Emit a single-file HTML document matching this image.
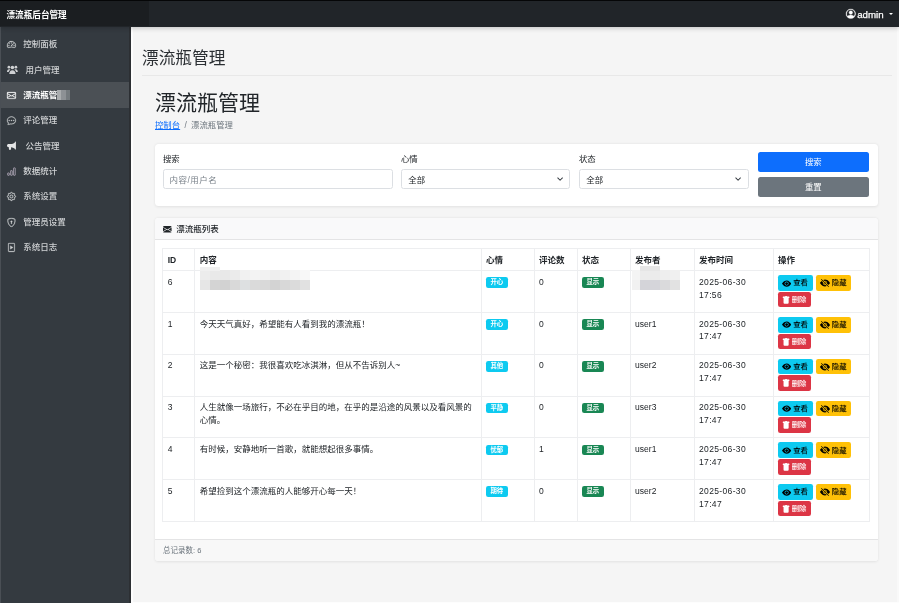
<!DOCTYPE html>
<html lang="zh-CN">
<head>
<meta charset="utf-8">
<title>漂流瓶管理 - 漂流瓶后台管理</title>
<style>
*{box-sizing:border-box;margin:0;padding:0}
html,body{width:899px;height:603px;overflow:hidden}
body>*{will-change:transform}
body{position:relative;background:#f5f5f5;color:#212529;font-family:"Liberation Sans","Noto Sans CJK SC",sans-serif;font-size:8.5px;line-height:1.5}
a{color:#0d6efd;text-decoration:underline}
svg{display:block}
button{border:0;margin:0;font-family:inherit;font-weight:inherit;letter-spacing:normal;cursor:pointer;-webkit-appearance:none;appearance:none}

/* top navbar */
.topbar{position:absolute;left:0;top:0;width:899px;height:26.5px;background:#212529;border-top:1.3px solid #050607;z-index:5;box-shadow:0 1px 5px rgba(0,0,0,.22)}
.brand{position:absolute;left:0;top:0;width:149px;height:25.2px;background:#1b1e21;color:#fff;font-size:8.6px;font-weight:700;padding-left:6.5px;line-height:29px;white-space:nowrap}
.user{position:absolute;right:6.2px;top:.5px;height:25.2px;display:flex;align-items:center;color:#fff;font-size:9.7px;line-height:25px;-webkit-text-stroke:.25px #fff}
.user svg{margin-right:1.6px;overflow:visible}
.user svg path{stroke:#fff;stroke-width:.5px}
.user .caret{width:0;height:0;border-left:2px solid transparent;border-right:2px solid transparent;border-top:2.2px solid #fff;margin-left:5.2px;margin-top:.6px}

/* sidebar */
.sidebar{position:absolute;left:0;top:26.5px;width:131px;height:576.5px;background:#343a40;z-index:3;border-right:2px solid #2c2f33;border-left:1px solid #4a4f55}
.sidebar ul{list-style:none;padding-top:4.8px}
.sidebar li{height:25.4px;position:relative}
.sidebar li a{display:flex;align-items:center;height:25.4px;color:#cfd1d3;text-decoration:none;font-size:8.5px;font-weight:500;padding-left:5.5px;white-space:nowrap}
.sidebar li a .ic{width:8.9px;height:8.9px;flex:none;margin-right:7.9px}
.sidebar li a .ic.wide{width:10.8px;height:9.2px;margin-right:8.2px;position:relative;top:-.6px}
.sidebar li a .ic.wide.bh{width:9.2px;height:9.2px;margin-left:.4px;margin-right:9.4px;color:#e4e5e6}
.sidebar li a .ic svg{width:100%;height:100%;overflow:visible}
.sidebar li a .ic:not(.wide) svg path{stroke:currentColor;stroke-width:.45px}
.sidebar li.active::before{content:"";position:absolute;left:0;right:0;top:-0.9px;height:25.9px;background:#4b5055}
.sidebar li.active a{position:relative}
.sidebar li.active a{color:#fff;font-weight:700}

/* main */
.main{position:absolute;left:131px;top:26.5px;width:765.8px;height:575.2px;background:#f5f5f5;border-left:2.6px solid #fdfdfd}
.rstrip{position:absolute;left:896.8px;top:26.5px;width:2.7px;height:576.5px;background:#f9f9f9}
.bstrip{position:absolute;left:131px;top:601.6px;width:768px;height:1.4px;background:#fdfdfd}
h2.ph{position:absolute;left:142.3px;top:45.5px;font-size:16.7px;font-weight:400;line-height:25px;color:#2b2f33;white-space:nowrap}
.hr{position:absolute;left:142px;top:75px;width:750px;height:1px;background:#e8e8e8}
h1.pt{position:absolute;left:154.6px;top:87px;font-size:21px;font-weight:400;line-height:31px;color:#212529;white-space:nowrap}
.crumb{position:absolute;left:154.6px;top:119px;font-size:8.4px;line-height:13px;list-style:none;display:flex;color:#6c757d;white-space:nowrap}
.crumb li+li::before{content:"/";padding:0 4.3px;color:#6c757d}

.card{position:absolute;background:#fff;border-radius:3.5px;box-shadow:0 .8px 3px rgba(0,0,0,.08),0 0 1.5px rgba(0,0,0,.05)}
.card.search{left:154.6px;top:144px;width:722.7px;height:61.6px}
.card.list{left:154.5px;top:217.5px;width:722.8px;height:343.3px;overflow:hidden}
label{position:absolute;top:151.9px;font-size:8.4px;line-height:14px;color:#212529;white-space:nowrap}
.ctl{position:absolute;top:169.1px;height:19.8px;border:1px solid #dcdfe3;border-radius:2.5px;background:#fff;font-size:8.4px;line-height:18px;color:#212529;white-space:nowrap}
.ctl.inp{padding-left:5.6px;color:#7a828a;font-size:8.5px}
.ctl.inp i{font-style:normal;padding:0 .5px}
.selw{position:absolute;top:169.1px;height:19.8px}
.selw .ctl.sel{left:0;top:0;width:100%;padding:.6px 0 0 6.3px;-webkit-appearance:none;appearance:none;outline:0}
.selw svg{position:absolute;right:7.2px;top:7.4px;width:6.2px;height:6.2px;pointer-events:none}
input.ctl{outline:0;font-family:inherit;letter-spacing:.45px;padding-top:1.6px;padding-bottom:0}
input.ctl::placeholder{color:#7a828a;opacity:1}
select{font-family:inherit}
.btn{position:absolute;left:758.4px;width:110.6px;height:19.6px;border-radius:2.5px;color:#fff;font-size:8.4px;line-height:21px;text-align:center}
.btn.pri{top:152.4px;background:#0d6efd}
.btn.sec{top:177.2px;background:#6c757d}

.chead{position:absolute;left:0;top:0;width:100%;height:21.7px;background:#f9f9fa;border-bottom:1px solid #e4e4e5;display:flex;align-items:center;padding-left:8.3px;padding-top:1.6px;font-size:8.5px;font-weight:500;color:#212529}
.chead svg{width:8.6px;height:8.6px;margin-right:4.4px}
.cfoot{position:absolute;left:0;top:321.2px;width:100%;height:22.2px;background:#f8f8f8;border-top:1px solid #e4e4e5;padding-left:8.1px;font-size:7.5px;line-height:21px;color:#6c757d}

table{position:absolute;left:7.4px;top:30.2px;width:707px;border-collapse:collapse;table-layout:fixed;font-size:8.5px;line-height:12.8px;color:#212529}
th,td{border:1px solid #edeef0;vertical-align:top;text-align:left;padding:4.6px 3px 0 3.6px;overflow:hidden}
th{height:22.1px;font-weight:700;padding-top:4.4px}
td{height:41.8px}
td.n{letter-spacing:.35px}
td.u{letter-spacing:.05px}
tr>:nth-child(1),tr>:nth-child(2){padding-left:4.3px}
.badge{display:inline-block;height:10.6px;min-width:21.6px;padding:0 3.4px;border-radius:2.2px;color:#fff;font-size:6.4px;font-weight:700;line-height:10.6px;text-align:center;vertical-align:top;margin-top:1.6px}
.b-info{background:#0dcaf0}
.b-ok{background:#198754}
.ab{display:inline-flex;align-items:center;height:15.6px;padding:0 4.4px 0 4.1px;border-radius:2.2px;font-size:7.4px;font-weight:500;line-height:15.6px;vertical-align:top;white-space:nowrap;padding-top:.6px}
.ab svg{width:7.4px;height:7.4px;margin-right:2px;flex:none}
.ab.v svg{width:9.2px;height:9.2px;margin-right:1.7px}
.ab.h svg{width:10px;height:10px;margin-right:1.7px}
.ab.d svg{width:8.2px;height:8.2px;margin-left:-.2px;margin-right:1.4px}
.ab.v{background:#0dcaf0;color:#000;margin-right:3px;padding-right:5px}
.ab.h{background:#ffc107;color:#000}
.ab.d{background:#dc3545;color:#fff;margin-top:1px}
td.op{padding:3.9px 0 0 3.8px;line-height:0;font-size:0}
.mz{position:absolute;display:flex;flex-wrap:wrap;overflow:hidden}
.mz i{display:block;height:100%;flex:none}
.mz.two i{height:50%}
</style>
</head>
<body>

<div class="main"></div>
<div class="rstrip"></div>
<div class="bstrip"></div>

<nav class="topbar">
  <div class="brand">漂流瓶后台管理</div>
  <div class="user">
    <svg width="9.6" height="9.6" viewBox="0 0 16 16" fill="#fff"><path d="M11 6a3 3 0 1 1-6 0 3 3 0 0 1 6 0z"/><path fill-rule="evenodd" d="M0 8a8 8 0 1 1 16 0A8 8 0 0 1 0 8zm8-7a7 7 0 0 0-5.468 11.37C3.242 11.226 4.805 10 8 10s4.757 1.225 5.468 2.37A7 7 0 0 0 8 1z"/></svg>
    <span>admin</span><i class="caret"></i>
  </div>
</nav>

<aside class="sidebar">
  <ul>
    <li><a><span class="ic"><svg viewBox="0 0 16 16" fill="currentColor"><path d="M8 4a.5.5 0 0 1 .5.5V6a.5.5 0 0 1-1 0V4.500A.5.5 0 0 1 8 4zM3.732 5.732a.5.5 0 0 1 .707 0l.915.914a.5.5 0 1 1-.708.708l-.914-.915a.5.5 0 0 1 0-.707zM2 10a.5.5 0 0 1 .5-.5h1.586a.5.5 0 0 1 0 1H2.500A.5.5 0 0 1 2 10zm9.500 0a.5.5 0 0 1 .5-.5h1.500a.5.5 0 0 1 0 1H12a.5.5 0 0 1-.5-.5zm.754-4.246a.389.389 0 0 0-.527-.02L7.547 9.310a.91.91 0 1 0 1.302 1.258l3.434-4.297a.389.389 0 0 0-.029-.518z"/><path fill-rule="evenodd" d="M0 10a8 8 0 1 1 15.547 2.661c-.442 1.253-1.845 1.602-2.932 1.250C11.309 13.488 9.475 13 8 13c-1.474 0-3.310.488-4.615.911-1.087.352-2.490.003-2.932-1.250A7.988 7.988 0 0 1 0 10zm8-7a7 7 0 0 0-6.603 9.329c.203.575.923.876 1.680.630C4.397 12.533 6.358 12 8 12s3.604.532 4.923.960c.757.245 1.477-.056 1.680-.631A7 7 0 0 0 8 3z"/></svg></span>控制面板</a></li>
    <li><a><span class="ic wide"><svg viewBox="0 0 20 16" fill="currentColor"><circle cx="10" cy="4.200" r="3.300"/><path d="M4.200 16c0-4.200 2.400-7 5.800-7s5.800 2.800 5.800 7z"/><circle cx="3.500" cy="3.600" r="2.500"/><path d="M0 12.500c0-3.200 1.500-5.300 3.800-5.300 1 0 1.800.3 2.400.9-1.800 1.200-2.800 2.700-3 4.400z"/><circle cx="16.500" cy="3.600" r="2.500"/><path d="M20 12.500c0-3.200-1.500-5.300-3.800-5.300-1 0-1.800.3-2.400.9 1.800 1.200 2.800 2.700 3 4.400z"/></svg></span>用户管理</a></li>
    <li class="active"><a><span class="ic"><svg viewBox="0 0 16 16" fill="currentColor"><path d="M0 4a2 2 0 0 1 2-2h12a2 2 0 0 1 2 2v8a2 2 0 0 1-2 2H2a2 2 0 0 1-2-2V4Zm2-1a1 1 0 0 0-1 1v.217l7 4.200 7-4.200V4a1 1 0 0 0-1-1H2Zm13 2.383-4.708 2.825L15 11.105V5.383Zm-.034 6.876-5.640-3.471L8 9.583l-1.326-.795-5.640 3.470A1 1 0 0 0 2 13h12a1 1 0 0 0 .966-.741ZM1 11.105l4.708-2.897L1 5.383v5.722Z"/></svg></span>漂流瓶管理</a></li>
    <li><a><span class="ic"><svg viewBox="0 0 16 16" fill="currentColor"><path d="M5 8a1 1 0 1 1-2 0 1 1 0 0 1 2 0zm4 0a1 1 0 1 1-2 0 1 1 0 0 1 2 0zm3 1a1 1 0 1 0 0-2 1 1 0 0 0 0 2z"/><path d="m2.165 15.803.02-.004c1.830-.363 2.948-.842 3.468-1.105A9.060 9.060 0 0 0 8 15c4.418 0 8-3.134 8-7s-3.582-7-8-7-8 3.134-8 7c0 1.760.743 3.370 1.970 4.600a10.437 10.437 0 0 1-.524 2.318l-.003.011a10.722 10.722 0 0 1-.244.637c-.079.186.074.394.273.362a21.673 21.673 0 0 0 .693-.125zm.8-3.108a1 1 0 0 0-.287-.801C1.618 10.830 1 9.468 1 8c0-3.192 3.004-6 7-6s7 2.808 7 6c0 3.193-3.004 6-7 6a8.060 8.060 0 0 1-2.088-.272 1 1 0 0 0-.711.074c-.387.196-1.240.570-2.634.893a10.970 10.970 0 0 0 .398-2z"/></svg></span>评论管理</a></li>
    <li><a><span class="ic wide bh"><svg viewBox="0 0 17 16" fill="currentColor"><path d="M15.500 0.600c.6 0 1 .4 1 1v12.800c0 .6-.4 1-1 1s-1-.4-1-1v-.5C12.400 12.300 10 11.300 7.500 11.100V14.500c0 .8-.7 1.500-1.500 1.500H5c-.8 0-1.500-.7-1.500-1.500V11H3c-1.700 0-3-1.300-3-3s1.300-3 3-3h3.500c2.900 0 5.700-1 8-2.900V1.600c0-.6.400-1 1-1z"/></svg></span>公告管理</a></li>
    <li><a><span class="ic" style="color:#bdb4c4"><svg viewBox="0 0 16 16" fill="none" stroke="currentColor" stroke-width="1.300"><rect x="1.200" y="10.700" width="3" height="4.200" rx=".5"/><rect x="6.500" y="6.500" width="3" height="8.400" rx=".5"/><rect x="11.800" y="1.600" width="3" height="13.300" rx=".5"/></svg></span>数据统计</a></li>
    <li><a><span class="ic"><svg viewBox="0 0 16 16" fill="currentColor"><path d="M8 4.754a3.246 3.246 0 1 0 0 6.492 3.246 3.246 0 0 0 0-6.492zM5.754 8a2.246 2.246 0 1 1 4.492 0 2.246 2.246 0 0 1-4.492 0z"/><path d="M9.796 1.343c-.527-1.790-3.065-1.790-3.592 0l-.094.319a.873.873 0 0 1-1.255.520l-.292-.160c-1.640-.892-3.433.902-2.540 2.541l.159.292a.873.873 0 0 1-.520 1.255l-.319.094c-1.790.527-1.790 3.065 0 3.592l.319.094a.873.873 0 0 1 .520 1.255l-.160.292c-.892 1.640.901 3.434 2.541 2.540l.292-.159a.873.873 0 0 1 1.255.520l.094.319c.527 1.790 3.065 1.790 3.592 0l.094-.319a.873.873 0 0 1 1.255-.520l.292.160c1.640.893 3.434-.902 2.540-2.541l-.159-.292a.873.873 0 0 1 .520-1.255l.319-.094c1.790-.527 1.790-3.065 0-3.592l-.319-.094a.873.873 0 0 1-.520-1.255l.160-.292c.893-1.640-.902-3.433-2.541-2.540l-.292.159a.873.873 0 0 1-1.255-.520l-.094-.319zm-2.633.283c.246-.835 1.428-.835 1.674 0l.094.319a1.873 1.873 0 0 0 2.693 1.115l.291-.160c.764-.415 1.600.420 1.184 1.185l-.159.292a1.873 1.873 0 0 0 1.116 2.692l.318.094c.835.246.835 1.428 0 1.674l-.319.094a1.873 1.873 0 0 0-1.115 2.693l.160.291c.415.764-.420 1.600-1.185 1.184l-.291-.159a1.873 1.873 0 0 0-2.693 1.116l-.094.318c-.246.835-1.428.835-1.674 0l-.094-.319a1.873 1.873 0 0 0-2.692-1.115l-.292.160c-.764.415-1.600-.420-1.184-1.185l.159-.291A1.873 1.873 0 0 0 1.945 8.930l-.319-.094c-.835-.246-.835-1.428 0-1.674l.319-.094A1.873 1.873 0 0 0 3.060 4.377l-.160-.292c-.415-.764.420-1.600 1.185-1.184l.292.159a1.873 1.873 0 0 0 2.692-1.115l.094-.319z"/></svg></span>系统设置</a></li>
    <li><a><span class="ic"><svg viewBox="0 0 16 16" fill="currentColor"><path d="M5.338 1.590a61.440 61.440 0 0 0-2.837.856.481.481 0 0 0-.328.390c-.554 4.157.726 7.190 2.253 9.188a10.725 10.725 0 0 0 2.287 2.233c.346.244.652.420.893.533.120.057.218.095.293.118a.55.55 0 0 0 .101.025.615.615 0 0 0 .1-.025c.076-.023.174-.061.294-.118.240-.113.547-.290.893-.533a10.726 10.726 0 0 0 2.287-2.233c1.527-1.997 2.807-5.031 2.253-9.188a.48.48 0 0 0-.328-.390c-.651-.213-1.750-.560-2.837-.855C9.552 1.290 8.531 1.067 8 1.067c-.530 0-1.552.223-2.662.524zM5.072.560C6.157.265 7.310 0 8 0s1.843.265 2.928.560c1.110.300 2.229.655 2.887.870a1.540 1.540 0 0 1 1.044 1.262c.596 4.477-.787 7.795-2.465 9.990a11.775 11.775 0 0 1-2.517 2.453 7.159 7.159 0 0 1-1.048.625c-.280.132-.581.240-.829.240s-.548-.108-.829-.240a7.158 7.158 0 0 1-1.048-.625 11.777 11.777 0 0 1-2.517-2.453C1.928 10.487.545 7.169 1.141 2.692A1.540 1.540 0 0 1 2.185 1.430 62.456 62.456 0 0 1 5.072.560z"/><path d="M9.500 6.500a1.500 1.500 0 0 1-1 1.415l.385 1.990a.5.5 0 0 1-.491.595h-.788a.5.5 0 0 1-.490-.595l.384-1.990a1.500 1.500 0 1 1 2.001-1.415z"/></svg></span>管理员设置</a></li>
    <li><a><span class="ic"><svg viewBox="0 0 16 16" fill="currentColor"><path d="M4 0h8a2 2 0 0 1 2 2v12a2 2 0 0 1-2 2H4a2 2 0 0 1-2-2V2a2 2 0 0 1 2-2zm0 1a1 1 0 0 0-1 1v12a1 1 0 0 0 1 1h8a1 1 0 0 0 1-1V2a1 1 0 0 0-1-1H4z"/><path d="M6 4.800l5 3.200-5 3.200z"/></svg></span>系统日志</a></li>
  </ul>
  <div class="mz" style="left:56px;top:63.3px;width:13.4px;height:10.2px"><i style="width:4.4px;background:#a9acae"></i><i style="width:4.5px;background:#8d9195"></i><i style="width:4.5px;background:#747a7e"></i></div>
</aside>

<h2 class="ph">漂流瓶管理</h2>
<div class="hr"></div>
<h1 class="pt">漂流瓶管理</h1>
<ol class="crumb"><li><a>控制台</a></li><li>漂流瓶管理</li></ol>

<section class="card search"></section>
<label style="left:162.8px">搜索</label>
<input type="text" class="ctl inp" style="left:162.8px;width:229.5px" placeholder="内容/用户名">
<label style="left:401.2px">心情</label>
<div class="selw" style="left:401.2px;width:169.2px"><select class="ctl sel"><option>全部</option></select><svg viewBox="0 0 16 16"><path fill="none" stroke="#343a40" stroke-linecap="round" stroke-linejoin="round" stroke-width="2.600" d="m2 5 6 6 6-6"/></svg></div>
<label style="left:579.4px">状态</label>
<div class="selw" style="left:579.4px;width:169.8px"><select class="ctl sel"><option>全部</option></select><svg viewBox="0 0 16 16"><path fill="none" stroke="#343a40" stroke-linecap="round" stroke-linejoin="round" stroke-width="2.600" d="m2 5 6 6 6-6"/></svg></div>
<button type="submit" class="btn pri">搜索</button>
<button type="reset" class="btn sec">重置</button>

<section class="card list">
  <div class="chead"><svg viewBox="0 0 16 16" fill="#212529"><path d="M.05 3.555A2 2 0 0 1 2 2h12a2 2 0 0 1 1.950 1.555L8 8.414.05 3.555ZM0 4.697v7.104l5.803-3.558L0 4.697ZM6.761 8.830l-6.570 4.027A2 2 0 0 0 2 14h12a2 2 0 0 0 1.808-1.144l-6.570-4.027L8 9.586l-1.239-.757Zm3.436-.586L16 11.801V4.697l-5.803 3.546Z"/></svg>漂流瓶列表</div>
  <table>
    <colgroup><col style="width:32px"><col style="width:287px"><col style="width:53px"><col style="width:43px"><col style="width:53px"><col style="width:64px"><col style="width:79px"><col style="width:96px"></colgroup>
    <thead><tr><th>ID</th><th>内容</th><th>心情</th><th>评论数</th><th>状态</th><th>发布者</th><th>发布时间</th><th>操作</th></tr></thead>
    <tbody>
      <tr><td class="n">6</td><td></td><td><span class="badge b-info">开心</span></td><td class="n">0</td><td><span class="badge b-ok">显示</span></td><td></td><td class="n">2025-06-30<br>17:56</td><td class="op"><button type="button" class="ab v"><svg viewBox="0 0 16 16" fill="#000"><path d="M10.500 8a2.500 2.500 0 1 1-5 0 2.500 2.500 0 0 1 5 0z"/><path d="M0 8s3-5.500 8-5.500S16 8 16 8s-3 5.500-8 5.500S0 8 0 8zm8 3.500a3.500 3.500 0 1 0 0-7 3.500 3.500 0 0 0 0 7z"/></svg>查看</button><button type="button" class="ab h"><svg viewBox="0 0 16 16" fill="#000"><path d="m10.790 12.912-1.614-1.615a3.500 3.500 0 0 1-4.474-4.474l-2.060-2.060C.938 6.278 0 8 0 8s3 5.500 8 5.500a7.029 7.029 0 0 0 2.790-.588zM5.210 3.088A7.028 7.028 0 0 1 8 2.500c5 0 8 5.500 8 5.500s-.939 1.721-2.641 3.238l-2.062-2.062a3.500 3.500 0 0 0-4.474-4.474L5.210 3.089z"/><path d="M5.525 7.646a2.500 2.500 0 0 0 2.829 2.829l-2.830-2.829zm4.950.708-2.829-2.830a2.500 2.500 0 0 1 2.829 2.829zm3.171 6-12-12 .708-.708 12 12-.708.708z"/></svg>隐藏</button><br><button type="button" class="ab d"><svg viewBox="0 0 16 16" fill="#fff"><path d="M2.500 1a1 1 0 0 0-1 1v1a1 1 0 0 0 1 1H3v9a2 2 0 0 0 2 2h6a2 2 0 0 0 2-2V4h.5a1 1 0 0 0 1-1V2a1 1 0 0 0-1-1H10a1 1 0 0 0-1-1H7a1 1 0 0 0-1 1H2.500z"/></svg>删除</button></td></tr>
      <tr><td class="n">1</td><td>今天天气真好，希望能有人看到我的漂流瓶！</td><td><span class="badge b-info">开心</span></td><td class="n">0</td><td><span class="badge b-ok">显示</span></td><td class="u">user1</td><td class="n">2025-06-30<br>17:47</td><td class="op"><button type="button" class="ab v"><svg viewBox="0 0 16 16" fill="#000"><path d="M10.500 8a2.500 2.500 0 1 1-5 0 2.500 2.500 0 0 1 5 0z"/><path d="M0 8s3-5.500 8-5.500S16 8 16 8s-3 5.500-8 5.500S0 8 0 8zm8 3.500a3.500 3.500 0 1 0 0-7 3.500 3.500 0 0 0 0 7z"/></svg>查看</button><button type="button" class="ab h"><svg viewBox="0 0 16 16" fill="#000"><path d="m10.790 12.912-1.614-1.615a3.500 3.500 0 0 1-4.474-4.474l-2.060-2.060C.938 6.278 0 8 0 8s3 5.500 8 5.500a7.029 7.029 0 0 0 2.790-.588zM5.210 3.088A7.028 7.028 0 0 1 8 2.500c5 0 8 5.500 8 5.500s-.939 1.721-2.641 3.238l-2.062-2.062a3.500 3.500 0 0 0-4.474-4.474L5.210 3.089z"/><path d="M5.525 7.646a2.500 2.500 0 0 0 2.829 2.829l-2.830-2.829zm4.950.708-2.829-2.830a2.500 2.500 0 0 1 2.829 2.829zm3.171 6-12-12 .708-.708 12 12-.708.708z"/></svg>隐藏</button><br><button type="button" class="ab d"><svg viewBox="0 0 16 16" fill="#fff"><path d="M2.500 1a1 1 0 0 0-1 1v1a1 1 0 0 0 1 1H3v9a2 2 0 0 0 2 2h6a2 2 0 0 0 2-2V4h.5a1 1 0 0 0 1-1V2a1 1 0 0 0-1-1H10a1 1 0 0 0-1-1H7a1 1 0 0 0-1 1H2.500z"/></svg>删除</button></td></tr>
      <tr><td class="n">2</td><td>这是一个秘密：我很喜欢吃冰淇淋，但从不告诉别人~</td><td><span class="badge b-info">其他</span></td><td class="n">0</td><td><span class="badge b-ok">显示</span></td><td class="u">user2</td><td class="n">2025-06-30<br>17:47</td><td class="op"><button type="button" class="ab v"><svg viewBox="0 0 16 16" fill="#000"><path d="M10.500 8a2.500 2.500 0 1 1-5 0 2.500 2.500 0 0 1 5 0z"/><path d="M0 8s3-5.500 8-5.500S16 8 16 8s-3 5.500-8 5.500S0 8 0 8zm8 3.500a3.500 3.500 0 1 0 0-7 3.500 3.500 0 0 0 0 7z"/></svg>查看</button><button type="button" class="ab h"><svg viewBox="0 0 16 16" fill="#000"><path d="m10.790 12.912-1.614-1.615a3.500 3.500 0 0 1-4.474-4.474l-2.060-2.060C.938 6.278 0 8 0 8s3 5.500 8 5.500a7.029 7.029 0 0 0 2.790-.588zM5.210 3.088A7.028 7.028 0 0 1 8 2.500c5 0 8 5.500 8 5.500s-.939 1.721-2.641 3.238l-2.062-2.062a3.500 3.500 0 0 0-4.474-4.474L5.210 3.089z"/><path d="M5.525 7.646a2.500 2.500 0 0 0 2.829 2.829l-2.830-2.829zm4.950.708-2.829-2.830a2.500 2.500 0 0 1 2.829 2.829zm3.171 6-12-12 .708-.708 12 12-.708.708z"/></svg>隐藏</button><br><button type="button" class="ab d"><svg viewBox="0 0 16 16" fill="#fff"><path d="M2.500 1a1 1 0 0 0-1 1v1a1 1 0 0 0 1 1H3v9a2 2 0 0 0 2 2h6a2 2 0 0 0 2-2V4h.5a1 1 0 0 0 1-1V2a1 1 0 0 0-1-1H10a1 1 0 0 0-1-1H7a1 1 0 0 0-1 1H2.500z"/></svg>删除</button></td></tr>
      <tr><td class="n">3</td><td>人生就像一场旅行，不必在乎目的地，在乎的是沿途的风景以及看风景的心情。</td><td><span class="badge b-info">平静</span></td><td class="n">0</td><td><span class="badge b-ok">显示</span></td><td class="u">user3</td><td class="n">2025-06-30<br>17:47</td><td class="op"><button type="button" class="ab v"><svg viewBox="0 0 16 16" fill="#000"><path d="M10.500 8a2.500 2.500 0 1 1-5 0 2.500 2.500 0 0 1 5 0z"/><path d="M0 8s3-5.500 8-5.500S16 8 16 8s-3 5.500-8 5.500S0 8 0 8zm8 3.500a3.500 3.500 0 1 0 0-7 3.500 3.500 0 0 0 0 7z"/></svg>查看</button><button type="button" class="ab h"><svg viewBox="0 0 16 16" fill="#000"><path d="m10.790 12.912-1.614-1.615a3.500 3.500 0 0 1-4.474-4.474l-2.060-2.060C.938 6.278 0 8 0 8s3 5.500 8 5.500a7.029 7.029 0 0 0 2.790-.588zM5.210 3.088A7.028 7.028 0 0 1 8 2.500c5 0 8 5.500 8 5.500s-.939 1.721-2.641 3.238l-2.062-2.062a3.500 3.500 0 0 0-4.474-4.474L5.210 3.089z"/><path d="M5.525 7.646a2.500 2.500 0 0 0 2.829 2.829l-2.830-2.829zm4.950.708-2.829-2.830a2.500 2.500 0 0 1 2.829 2.829zm3.171 6-12-12 .708-.708 12 12-.708.708z"/></svg>隐藏</button><br><button type="button" class="ab d"><svg viewBox="0 0 16 16" fill="#fff"><path d="M2.500 1a1 1 0 0 0-1 1v1a1 1 0 0 0 1 1H3v9a2 2 0 0 0 2 2h6a2 2 0 0 0 2-2V4h.5a1 1 0 0 0 1-1V2a1 1 0 0 0-1-1H10a1 1 0 0 0-1-1H7a1 1 0 0 0-1 1H2.500z"/></svg>删除</button></td></tr>
      <tr><td class="n">4</td><td>有时候，安静地听一首歌，就能想起很多事情。</td><td><span class="badge b-info">忧郁</span></td><td class="n">1</td><td><span class="badge b-ok">显示</span></td><td class="u">user1</td><td class="n">2025-06-30<br>17:47</td><td class="op"><button type="button" class="ab v"><svg viewBox="0 0 16 16" fill="#000"><path d="M10.500 8a2.500 2.500 0 1 1-5 0 2.500 2.500 0 0 1 5 0z"/><path d="M0 8s3-5.500 8-5.500S16 8 16 8s-3 5.500-8 5.500S0 8 0 8zm8 3.500a3.500 3.500 0 1 0 0-7 3.500 3.500 0 0 0 0 7z"/></svg>查看</button><button type="button" class="ab h"><svg viewBox="0 0 16 16" fill="#000"><path d="m10.790 12.912-1.614-1.615a3.500 3.500 0 0 1-4.474-4.474l-2.060-2.060C.938 6.278 0 8 0 8s3 5.500 8 5.500a7.029 7.029 0 0 0 2.790-.588zM5.210 3.088A7.028 7.028 0 0 1 8 2.500c5 0 8 5.500 8 5.500s-.939 1.721-2.641 3.238l-2.062-2.062a3.500 3.500 0 0 0-4.474-4.474L5.210 3.089z"/><path d="M5.525 7.646a2.500 2.500 0 0 0 2.829 2.829l-2.830-2.829zm4.950.708-2.829-2.830a2.500 2.500 0 0 1 2.829 2.829zm3.171 6-12-12 .708-.708 12 12-.708.708z"/></svg>隐藏</button><br><button type="button" class="ab d"><svg viewBox="0 0 16 16" fill="#fff"><path d="M2.500 1a1 1 0 0 0-1 1v1a1 1 0 0 0 1 1H3v9a2 2 0 0 0 2 2h6a2 2 0 0 0 2-2V4h.5a1 1 0 0 0 1-1V2a1 1 0 0 0-1-1H10a1 1 0 0 0-1-1H7a1 1 0 0 0-1 1H2.500z"/></svg>删除</button></td></tr>
      <tr><td class="n">5</td><td>希望捡到这个漂流瓶的人能够开心每一天！</td><td><span class="badge b-info">期待</span></td><td class="n">0</td><td><span class="badge b-ok">显示</span></td><td class="u">user2</td><td class="n">2025-06-30<br>17:47</td><td class="op"><button type="button" class="ab v"><svg viewBox="0 0 16 16" fill="#000"><path d="M10.500 8a2.500 2.500 0 1 1-5 0 2.500 2.500 0 0 1 5 0z"/><path d="M0 8s3-5.500 8-5.500S16 8 16 8s-3 5.500-8 5.500S0 8 0 8zm8 3.500a3.500 3.500 0 1 0 0-7 3.500 3.500 0 0 0 0 7z"/></svg>查看</button><button type="button" class="ab h"><svg viewBox="0 0 16 16" fill="#000"><path d="m10.790 12.912-1.614-1.615a3.500 3.500 0 0 1-4.474-4.474l-2.060-2.060C.938 6.278 0 8 0 8s3 5.500 8 5.500a7.029 7.029 0 0 0 2.790-.588zM5.210 3.088A7.028 7.028 0 0 1 8 2.500c5 0 8 5.500 8 5.500s-.939 1.721-2.641 3.238l-2.062-2.062a3.500 3.500 0 0 0-4.474-4.474L5.210 3.089z"/><path d="M5.525 7.646a2.500 2.500 0 0 0 2.829 2.829l-2.830-2.829zm4.950.708-2.829-2.830a2.500 2.500 0 0 1 2.829 2.829zm3.171 6-12-12 .708-.708 12 12-.708.708z"/></svg>隐藏</button><br><button type="button" class="ab d"><svg viewBox="0 0 16 16" fill="#fff"><path d="M2.500 1a1 1 0 0 0-1 1v1a1 1 0 0 0 1 1H3v9a2 2 0 0 0 2 2h6a2 2 0 0 0 2-2V4h.5a1 1 0 0 0 1-1V2a1 1 0 0 0-1-1H10a1 1 0 0 0-1-1H7a1 1 0 0 0-1 1H2.500z"/></svg>删除</button></td></tr>
    </tbody>
  </table>
  <div class="cfoot">总记录数: 6</div>
</section>
<div class="mz two" style="left:200px;top:270px;width:110px;height:20px"><i style="width:10px;background:#ececec"></i><i style="width:10px;background:#e9e9e9"></i><i style="width:10px;background:#e8e8e8"></i><i style="width:10px;background:#ebebeb"></i><i style="width:10px;background:#f1f1f1"></i><i style="width:10px;background:#f3f3f3"></i><i style="width:10px;background:#f2f2f2"></i><i style="width:10px;background:#eeeeee"></i><i style="width:10px;background:#f1f1f1"></i><i style="width:10px;background:#f4f4f4"></i><i style="width:10px;background:#f8f8f8"></i><i style="width:10px;background:#e6e6e6"></i><i style="width:10px;background:#d4d4d4"></i><i style="width:10px;background:#d2d2d2"></i><i style="width:10px;background:#d9d9d9"></i><i style="width:10px;background:#dde0e1"></i><i style="width:10px;background:#dadada"></i><i style="width:10px;background:#d9d9d9"></i><i style="width:10px;background:#d3d3d3"></i><i style="width:10px;background:#d8d8d8"></i><i style="width:10px;background:#dbdbdb"></i><i style="width:10px;background:#e1e1e1"></i></div><div class="mz" style="left:200px;top:266.5px;width:20px;height:3.5px"><i style="width:20px;background:#f0f0f0"></i></div>
<div class="mz two" style="left:632px;top:270px;width:48px;height:20px"><i style="width:8px;background:#f4f4f4"></i><i style="width:10px;background:#ececec"></i><i style="width:10px;background:#ebebeb"></i><i style="width:10px;background:#eeeeee"></i><i style="width:10px;background:#f0f0f0"></i><i style="width:8px;background:#f1f1f1"></i><i style="width:10px;background:#d4d4d9"></i><i style="width:10px;background:#d5d5da"></i><i style="width:10px;background:#dadadc"></i><i style="width:10px;background:#e2e2e2"></i></div><div class="mz" style="left:640px;top:265.5px;width:20px;height:4.5px"><i style="width:20px;background:#e6e6e6"></i></div>

</body>
</html>
